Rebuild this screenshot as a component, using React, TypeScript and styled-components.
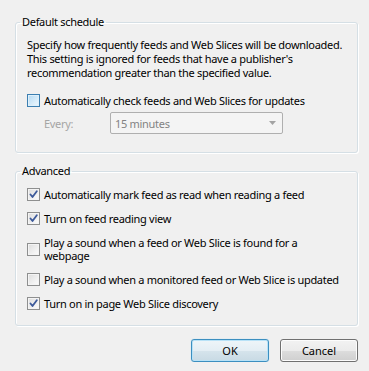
import React, {useState} from 'react';
import styled, {createGlobalStyle, css} from "styled-components";

const GlobalStyle = createGlobalStyle`
  html, body {
    margin: 0;
    padding: 0;
    background: #f0f0f0;
  }
  body {
    font-family: "Noto Sans", "Open Sans", sans-serif;
    font-size: 11px;
    letter-spacing: -0.3px;
    color: #000;
  }
`

type Option = {label: string, checked: boolean}

const advancedOptions: Option[] = [
    {label: 'Automatically mark feed as read when reading a feed', checked: true},
    {label: 'Turn on feed reading view', checked: true},
    {label: 'Play a sound when a feed or Web Slice is found for a\nwebpage', checked: false},
    {label: 'Play a sound when a monitored feed or Web Slice is updated', checked: false},
    {label: 'Turn on in page Web Slice discovery', checked: true},
]

const Check = ({checked, hot}: {checked: boolean, hot?: boolean}) => (
    <Box $hot={hot}>
        {checked &&
            <svg width="9" height="9" viewBox="0 0 9 9">
                <path d="M1.5 4.5 L3.5 7 L7.8 1.2" fill="none" stroke="#3d5a9a" strokeWidth="1.8"
                      strokeLinecap="round" strokeLinejoin="round"/>
            </svg>
        }
    </Box>
)

const App = () => {

    const [auto, setAuto] = useState(false)

    const [options, setOptions] = useState(advancedOptions)

    const toggle = (i: number) => {
        setOptions(options.map((o, idx) => idx === i ? {...o, checked: !o.checked} : o))
    }

    return (
        <Page>
            <GlobalStyle/>
            <Group>
                <Legend>Default schedule</Legend>
                <Description>
                    Specify how frequently feeds and Web Slices will be downloaded.<br/>
                    This setting is ignored for feeds that have a publisher's<br/>
                    recommendation greater than the specified value.
                </Description>
                <Row onClick={() => setAuto(!auto)}>
                    <Check checked={auto} hot/>
                    <Label>Automatically check feeds and Web Slices for updates</Label>
                </Row>
                <EveryRow>
                    <Muted>Every:</Muted>
                    <Select>
                        <span>15 minutes</span>
                        <svg width="7" height="4" viewBox="0 0 7 4">
                            <path d="M0 0 H7 L3.5 4 Z" fill="#a3a3a3"/>
                        </svg>
                    </Select>
                </EveryRow>
            </Group>
            <Group $advanced>
                <Legend>Advanced</Legend>
                <List>
                    {options.map((o, i) =>
                        <Row key={o.label} onClick={() => toggle(i)}>
                            <Check checked={o.checked}/>
                            <Label>{o.label}</Label>
                        </Row>
                    )}
                </List>
            </Group>
            <Buttons>
                <Button $primary>OK</Button>
                <Button>Cancel</Button>
            </Buttons>
        </Page>
    );
};

const Page = styled.div`
  width: 369px;
  box-sizing: border-box;
  padding: 15px 11px 0 15px;
`

const Group = styled.fieldset<{$advanced?: boolean}>`
  margin: ${p => p.$advanced ? '11px' : '0'} 0 0 0;
  padding: ${p => p.$advanced ? '10px 8px 15px 11px' : '9px 8px 18px 11px'};
  border: 1px solid #d5dfe5;
  border-radius: 3px;
  box-shadow: inset 1px 1px 0 #fff, 1px 1px 0 #fff;
`

const Legend = styled.legend`
  padding: 0 2px;
  margin-left: -7px;
  line-height: 14px;
`

const Description = styled.p`
  margin: 0;
  line-height: 14px;
  white-space: nowrap;
`

const List = styled.div`
  display: flex;
  flex-direction: column;
  gap: 11px;
`

const Row = styled.label`
  display: flex;
  align-items: center;
  gap: 4px;
  cursor: default;
  line-height: 13px;
  ${Description} + & {
    margin-top: 14px;
  }
`

const Box = styled.span<{$hot?: boolean}>`
  flex: none;
  width: 13px;
  height: 13px;
  box-sizing: border-box;
  display: flex;
  align-items: center;
  justify-content: center;
  border: 1px solid #8e8f8f;
  background: linear-gradient(135deg, #dcdcdc 0%, #f4f4f4 70%, #fbfbfb 100%);
  box-shadow: inset 0 0 0 1px #f4f4f4;
  ${p => p.$hot && css`
    border-color: #3c7fb1;
    background: linear-gradient(135deg, #b3d9f3 0%, #dff0fb 70%, #eaf6fd 100%);
    box-shadow: inset 0 0 0 1px #def0fb;
  `}
`

const Label = styled.span`
  white-space: pre;
`

const EveryRow = styled.div`
  display: flex;
  align-items: center;
  margin-top: 5px;
  padding-left: 17px;
`

const Muted = styled.span`
  width: 66px;
  color: #a5a5a5;
`

const Select = styled.div`
  width: 173px;
  height: 22px;
  box-sizing: border-box;
  display: flex;
  align-items: center;
  justify-content: space-between;
  padding: 0 6px 0 4px;
  border: 1px solid #afafaf;
  border-radius: 2px;
  background: #f4f4f4;
  color: #838383;
`

const Buttons = styled.div`
  display: flex;
  justify-content: flex-end;
  gap: 11px;
  margin-top: 13px;
`

const Button = styled.button<{$primary?: boolean}>`
  width: 78px;
  height: 23px;
  box-sizing: border-box;
  border: 1px solid #707070;
  border-radius: 3px;
  font-family: inherit;
  font-size: 11px;
  color: #000;
  padding: 0;
  background: linear-gradient(#f2f2f2 0%, #ebebeb 50%, #dddddd 51%, #cfcfcf 100%);
  box-shadow: inset 0 0 0 1px #fcfcfc;
  ${p => p.$primary && css`
    border-color: #3c8fc0;
    background: linear-gradient(#eef5f9 0%, #e4eef4 50%, #d6e4ec 51%, #c8dae4 100%);
    box-shadow: inset 0 0 0 1px #b8e2f7, 0 0 1px #8cd0f2;
  `}
`

export default App;
